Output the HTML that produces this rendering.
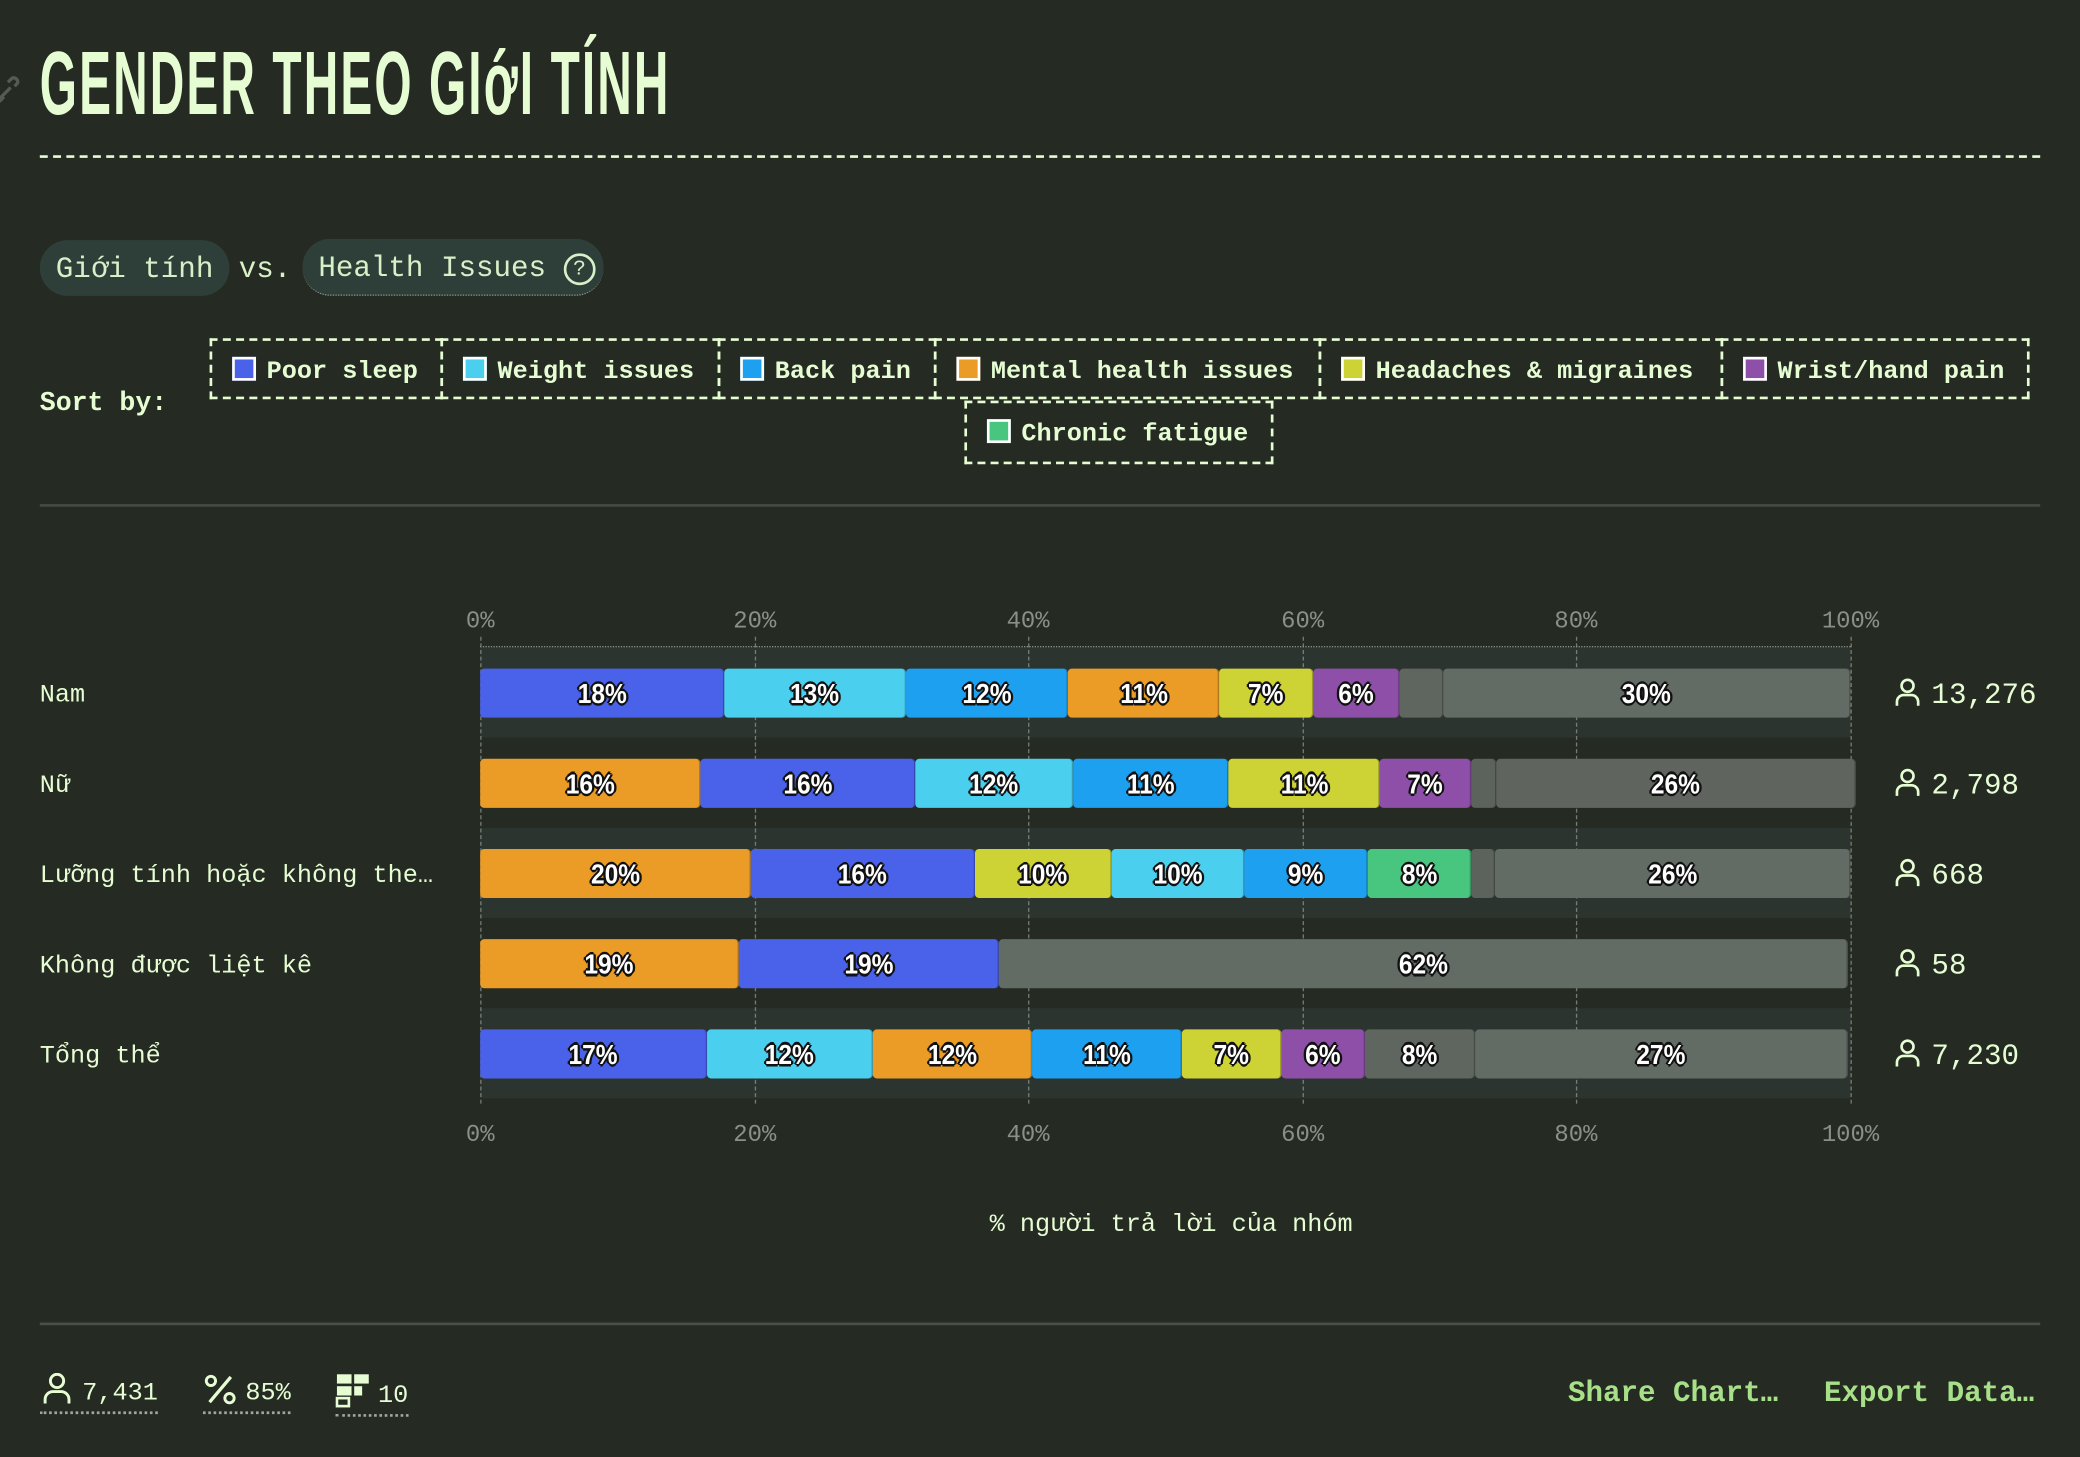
<!DOCTYPE html>
<html><head><meta charset="utf-8">
<style>
html,body{margin:0;padding:0;background:#252a22;width:2080px;height:1456px;overflow:hidden}
#w{position:absolute;left:0;top:0;width:1568px;height:1098px;transform:scale(1.32653);transform-origin:0 0;font-family:"Liberation Mono",monospace;color:#e6fdd4}
.a{position:absolute;white-space:nowrap}
.title{left:30px;top:28px;font-family:"Liberation Sans Narrow","Liberation Sans",sans-serif;font-weight:bold;font-size:68px;line-height:70px;color:#e6fdd4;transform:scaleX(0.53);transform-origin:0 0;letter-spacing:3px}
.pill{background:#2e3f3a;border-radius:21px;height:42px;line-height:46px;font-size:22px;color:#d8f0c8;padding:0 12px}
.lg{position:absolute;border:2px dashed #e6fdd4;height:46px;line-height:47px;font-weight:bold;font-size:19px;box-sizing:border-box;white-space:nowrap}
.sw{display:inline-block;width:14px;height:14px;border:2px solid #fff;vertical-align:-2px;margin:0 8px 0 15px}
.band{position:absolute;left:362px;width:1033px;height:68px;background:#2c3430}
.seg{position:absolute;height:37px;border-radius:3px;text-align:center;line-height:39px;font-family:"Liberation Sans Narrow","Liberation Sans",sans-serif;font-weight:bold;font-size:21px;color:#fff;text-shadow:-2px 0 #111,2px 0 #111,0 -2px #111,0 2px #111,-1px -1px #111,1px 1px #111,-1px 1px #111,1px -1px #111;box-shadow:inset -1px 0 0 rgba(0,0,0,0.25)}
.seg span{display:inline-block;transform:scaleX(0.88)}
.ax{position:absolute;font-size:18px;color:#8a9088;transform:translateX(-50%)}
.vg{position:absolute;top:480px;height:352px;border-left:1px dashed #8a9088;opacity:.8}
.rl{position:absolute;left:30px;font-size:19px;color:#e6fdd4}
.cnt{position:absolute;left:1428px;font-size:22px;color:#e6fdd4}
.cnt svg{vertical-align:-3px;margin-right:8px}
</style></head><body><div id="w">
<div class="a title">GENDER THEO GIớI TÍNH</div>
<svg class="a" style="left:-6px;top:54px" width="22" height="26" viewBox="0 0 22 26"><path d="M6 20l8-8M4 16l-2 2a3 3 0 004 4l3-3M12 8l3-3a3 3 0 014 4l-2 2" stroke="#555a52" stroke-width="2.5" fill="none"/></svg>
<div class="a" style="left:30px;top:117px;width:1508px;border-top:2px dashed #e6fdd4"></div>

<div class="a pill" style="left:30px;top:181px">Giới tính</div>
<div class="a" style="left:180px;top:181px;line-height:46px;font-size:22px;color:#d8f0c8">vs.</div>
<div class="a pill" style="left:228px;top:180px;width:203px;border-bottom:1px dotted #8a9088">Health Issues <span style="display:inline-block;width:20px;height:20px;border:2px solid #d8f0c8;border-radius:50%;line-height:20px;text-align:center;font-size:16px;vertical-align:1px">?</span></div>

<div class="a" style="left:30px;top:293px;font-weight:bold;font-size:20px">Sort by:</div>
<div class="lg" style="left:158px;top:255px;width:176px"><span class="sw" style="background:#4a62ea"></span>Poor sleep</div>
<div class="lg" style="left:332px;top:255px;width:211px"><span class="sw" style="background:#4acfee"></span>Weight issues</div>
<div class="lg" style="left:541px;top:255px;width:165px"><span class="sw" style="background:#1ea0f0"></span>Back pain</div>
<div class="lg" style="left:704px;top:255px;width:292px"><span class="sw" style="background:#eb9c26"></span>Mental health issues</div>
<div class="lg" style="left:994px;top:255px;width:305px"><span class="sw" style="background:#cdd334"></span>Headaches &amp; migraines</div>
<div class="lg" style="left:1297px;top:255px;width:233px"><span class="sw" style="background:#8e4fa8"></span>Wrist/hand pain</div>
<div class="lg" style="left:727px;top:302px;width:233px;height:48px"><span class="sw" style="background:#48c57e"></span>Chronic fatigue</div>

<div class="a" style="left:30px;top:380px;width:1508px;height:2px;background:#454a43"></div>

<div class="ax" style="left:362px;top:459px">0%</div><div class="ax" style="left:569px;top:459px">20%</div><div class="ax" style="left:775px;top:459px">40%</div><div class="ax" style="left:982px;top:459px">60%</div><div class="ax" style="left:1188px;top:459px">80%</div><div class="ax" style="left:1395px;top:459px">100%</div>
<div class="ax" style="left:362px;top:846px">0%</div><div class="ax" style="left:569px;top:846px">20%</div><div class="ax" style="left:775px;top:846px">40%</div><div class="ax" style="left:982px;top:846px">60%</div><div class="ax" style="left:1188px;top:846px">80%</div><div class="ax" style="left:1395px;top:846px">100%</div>

<div class="band" style="top:488px"></div>
<div class="band" style="top:624px"></div>
<div class="band" style="top:760px"></div>
<div class="a" style="left:362px;top:487px;width:1033px;border-top:1px dotted #8a9088"></div>
<div class="vg" style="left:362px"></div><div class="vg" style="left:569px"></div><div class="vg" style="left:775px"></div><div class="vg" style="left:982px"></div><div class="vg" style="left:1188px"></div><div class="vg" style="left:1395px"></div>

<!-- row 1 -->
<div class="seg" style="top:504px;left:362px;width:184px;background:#4a62ea"><span>18%</span></div>
<div class="seg" style="top:504px;left:546px;width:137px;background:#4acfee"><span>13%</span></div>
<div class="seg" style="top:504px;left:683px;width:122px;background:#1ea0f0"><span>12%</span></div>
<div class="seg" style="top:504px;left:805px;width:114px;background:#eb9c26"><span>11%</span></div>
<div class="seg" style="top:504px;left:919px;width:71px;background:#cdd334"><span>7%</span></div>
<div class="seg" style="top:504px;left:990px;width:65px;background:#8e4fa8"><span>6%</span></div>
<div class="seg" style="top:504px;left:1055px;width:33px;background:#5f6660"></div>
<div class="seg" style="top:504px;left:1088px;width:307px;background:#636b65"><span>30%</span></div>
<!-- row 2 -->
<div class="seg" style="top:572px;left:362px;width:166px;background:#eb9c26"><span>16%</span></div>
<div class="seg" style="top:572px;left:528px;width:162px;background:#4a62ea"><span>16%</span></div>
<div class="seg" style="top:572px;left:690px;width:119px;background:#4acfee"><span>12%</span></div>
<div class="seg" style="top:572px;left:809px;width:117px;background:#1ea0f0"><span>11%</span></div>
<div class="seg" style="top:572px;left:926px;width:114px;background:#cdd334"><span>11%</span></div>
<div class="seg" style="top:572px;left:1040px;width:69px;background:#8e4fa8"><span>7%</span></div>
<div class="seg" style="top:572px;left:1109px;width:19px;background:#5c625c"></div>
<div class="seg" style="top:572px;left:1128px;width:271px;background:#5f655e"><span>26%</span></div>
<!-- row 3 -->
<div class="seg" style="top:640px;left:362px;width:204px;background:#eb9c26"><span>20%</span></div>
<div class="seg" style="top:640px;left:566px;width:169px;background:#4a62ea"><span>16%</span></div>
<div class="seg" style="top:640px;left:735px;width:103px;background:#cdd334"><span>10%</span></div>
<div class="seg" style="top:640px;left:838px;width:100px;background:#4acfee"><span>10%</span></div>
<div class="seg" style="top:640px;left:938px;width:93px;background:#1ea0f0"><span>9%</span></div>
<div class="seg" style="top:640px;left:1031px;width:78px;background:#48c57e"><span>8%</span></div>
<div class="seg" style="top:640px;left:1109px;width:18px;background:#5c625c"></div>
<div class="seg" style="top:640px;left:1127px;width:268px;background:#636b65"><span>26%</span></div>
<!-- row 4 -->
<div class="seg" style="top:708px;left:362px;width:195px;background:#eb9c26"><span>19%</span></div>
<div class="seg" style="top:708px;left:557px;width:196px;background:#4a62ea"><span>19%</span></div>
<div class="seg" style="top:708px;left:753px;width:640px;background:#636b65"><span>62%</span></div>
<!-- row 5 -->
<div class="seg" style="top:776px;left:362px;width:171px;background:#4a62ea"><span>17%</span></div>
<div class="seg" style="top:776px;left:533px;width:125px;background:#4acfee"><span>12%</span></div>
<div class="seg" style="top:776px;left:658px;width:120px;background:#eb9c26"><span>12%</span></div>
<div class="seg" style="top:776px;left:778px;width:113px;background:#1ea0f0"><span>11%</span></div>
<div class="seg" style="top:776px;left:891px;width:75px;background:#cdd334"><span>7%</span></div>
<div class="seg" style="top:776px;left:966px;width:63px;background:#8e4fa8"><span>6%</span></div>
<div class="seg" style="top:776px;left:1029px;width:83px;background:#5f6660"><span>8%</span></div>
<div class="seg" style="top:776px;left:1112px;width:281px;background:#636b65"><span>27%</span></div>

<div class="rl" style="top:513px">Nam</div>
<div class="rl" style="top:581px">Nữ</div>
<div class="rl" style="top:649px">Lưỡng tính hoặc không the…</div>
<div class="rl" style="top:717px">Không được liệt kê</div>
<div class="rl" style="top:785px">Tổng thể</div>

<svg width="0" height="0" style="position:absolute"><defs><g id="p"><circle cx="10" cy="6" r="4.5" fill="none" stroke="#e6fdd4" stroke-width="2"/><path d="M2 21v-3a5 5 0 015-5h6a5 5 0 015 5v3" fill="none" stroke="#e6fdd4" stroke-width="2"/></g></defs></svg>
<div class="cnt" style="top:511px"><svg width="20" height="22"><use href="#p"/></svg>13,276</div>
<div class="cnt" style="top:579px"><svg width="20" height="22"><use href="#p"/></svg>2,798</div>
<div class="cnt" style="top:647px"><svg width="20" height="22"><use href="#p"/></svg>668</div>
<div class="cnt" style="top:715px"><svg width="20" height="22"><use href="#p"/></svg>58</div>
<div class="cnt" style="top:783px"><svg width="20" height="22"><use href="#p"/></svg>7,230</div>

<div class="a" style="left:746px;top:912px;font-size:19px">% người trả lời của nhóm</div>

<div class="a" style="left:30px;top:997px;width:1508px;height:2px;background:#4a4f48"></div>

<div class="a" style="left:30px;top:1035px;font-size:19px;border-bottom:2px dotted #a0a89c;padding-bottom:3px"><svg width="26" height="24" style="vertical-align:-4px;margin-right:6px"><circle cx="13" cy="6" r="5" fill="none" stroke="#e6fdd4" stroke-width="2.2"/><path d="M4 23v-3a6 6 0 016-6h6a6 6 0 016 6v3" fill="none" stroke="#e6fdd4" stroke-width="2.2"/></svg>7,431</div>
<div class="a" style="left:153px;top:1035px;font-size:19px;border-bottom:2px dotted #a0a89c;padding-bottom:3px"><svg width="26" height="24" style="vertical-align:-4px;margin-right:6px"><circle cx="6" cy="6" r="3.5" fill="none" stroke="#e6fdd4" stroke-width="2.2"/><circle cx="20" cy="19" r="3.5" fill="none" stroke="#e6fdd4" stroke-width="2.2"/><path d="M21 3L5 22" stroke="#e6fdd4" stroke-width="2.5"/></svg>85%</div>
<div class="a" style="left:253px;top:1035px;font-size:19px;border-bottom:2px dotted #a0a89c;padding-bottom:3px"><svg width="26" height="26" style="vertical-align:-4px;margin-right:6px"><rect x="1" y="1" width="11" height="7" fill="#e6fdd4"/><rect x="14" y="1" width="11" height="7" fill="#e6fdd4"/><rect x="1" y="10" width="11" height="7" fill="#e6fdd4"/><rect x="14" y="10" width="6" height="7" fill="#e6fdd4"/><rect x="1" y="19" width="9" height="6" fill="none" stroke="#e6fdd4" stroke-width="2"/><path d="M13 0v26" stroke="#252a22" stroke-width="1.5" stroke-dasharray="2 2"/></svg>10</div>

<div class="a" style="left:1182px;top:1038px;font-size:22px;font-weight:bold;color:#a8e08a">Share Chart…</div>
<div class="a" style="left:1375px;top:1038px;font-size:22px;font-weight:bold;color:#a8e08a">Export Data…</div>
</div></body></html>
